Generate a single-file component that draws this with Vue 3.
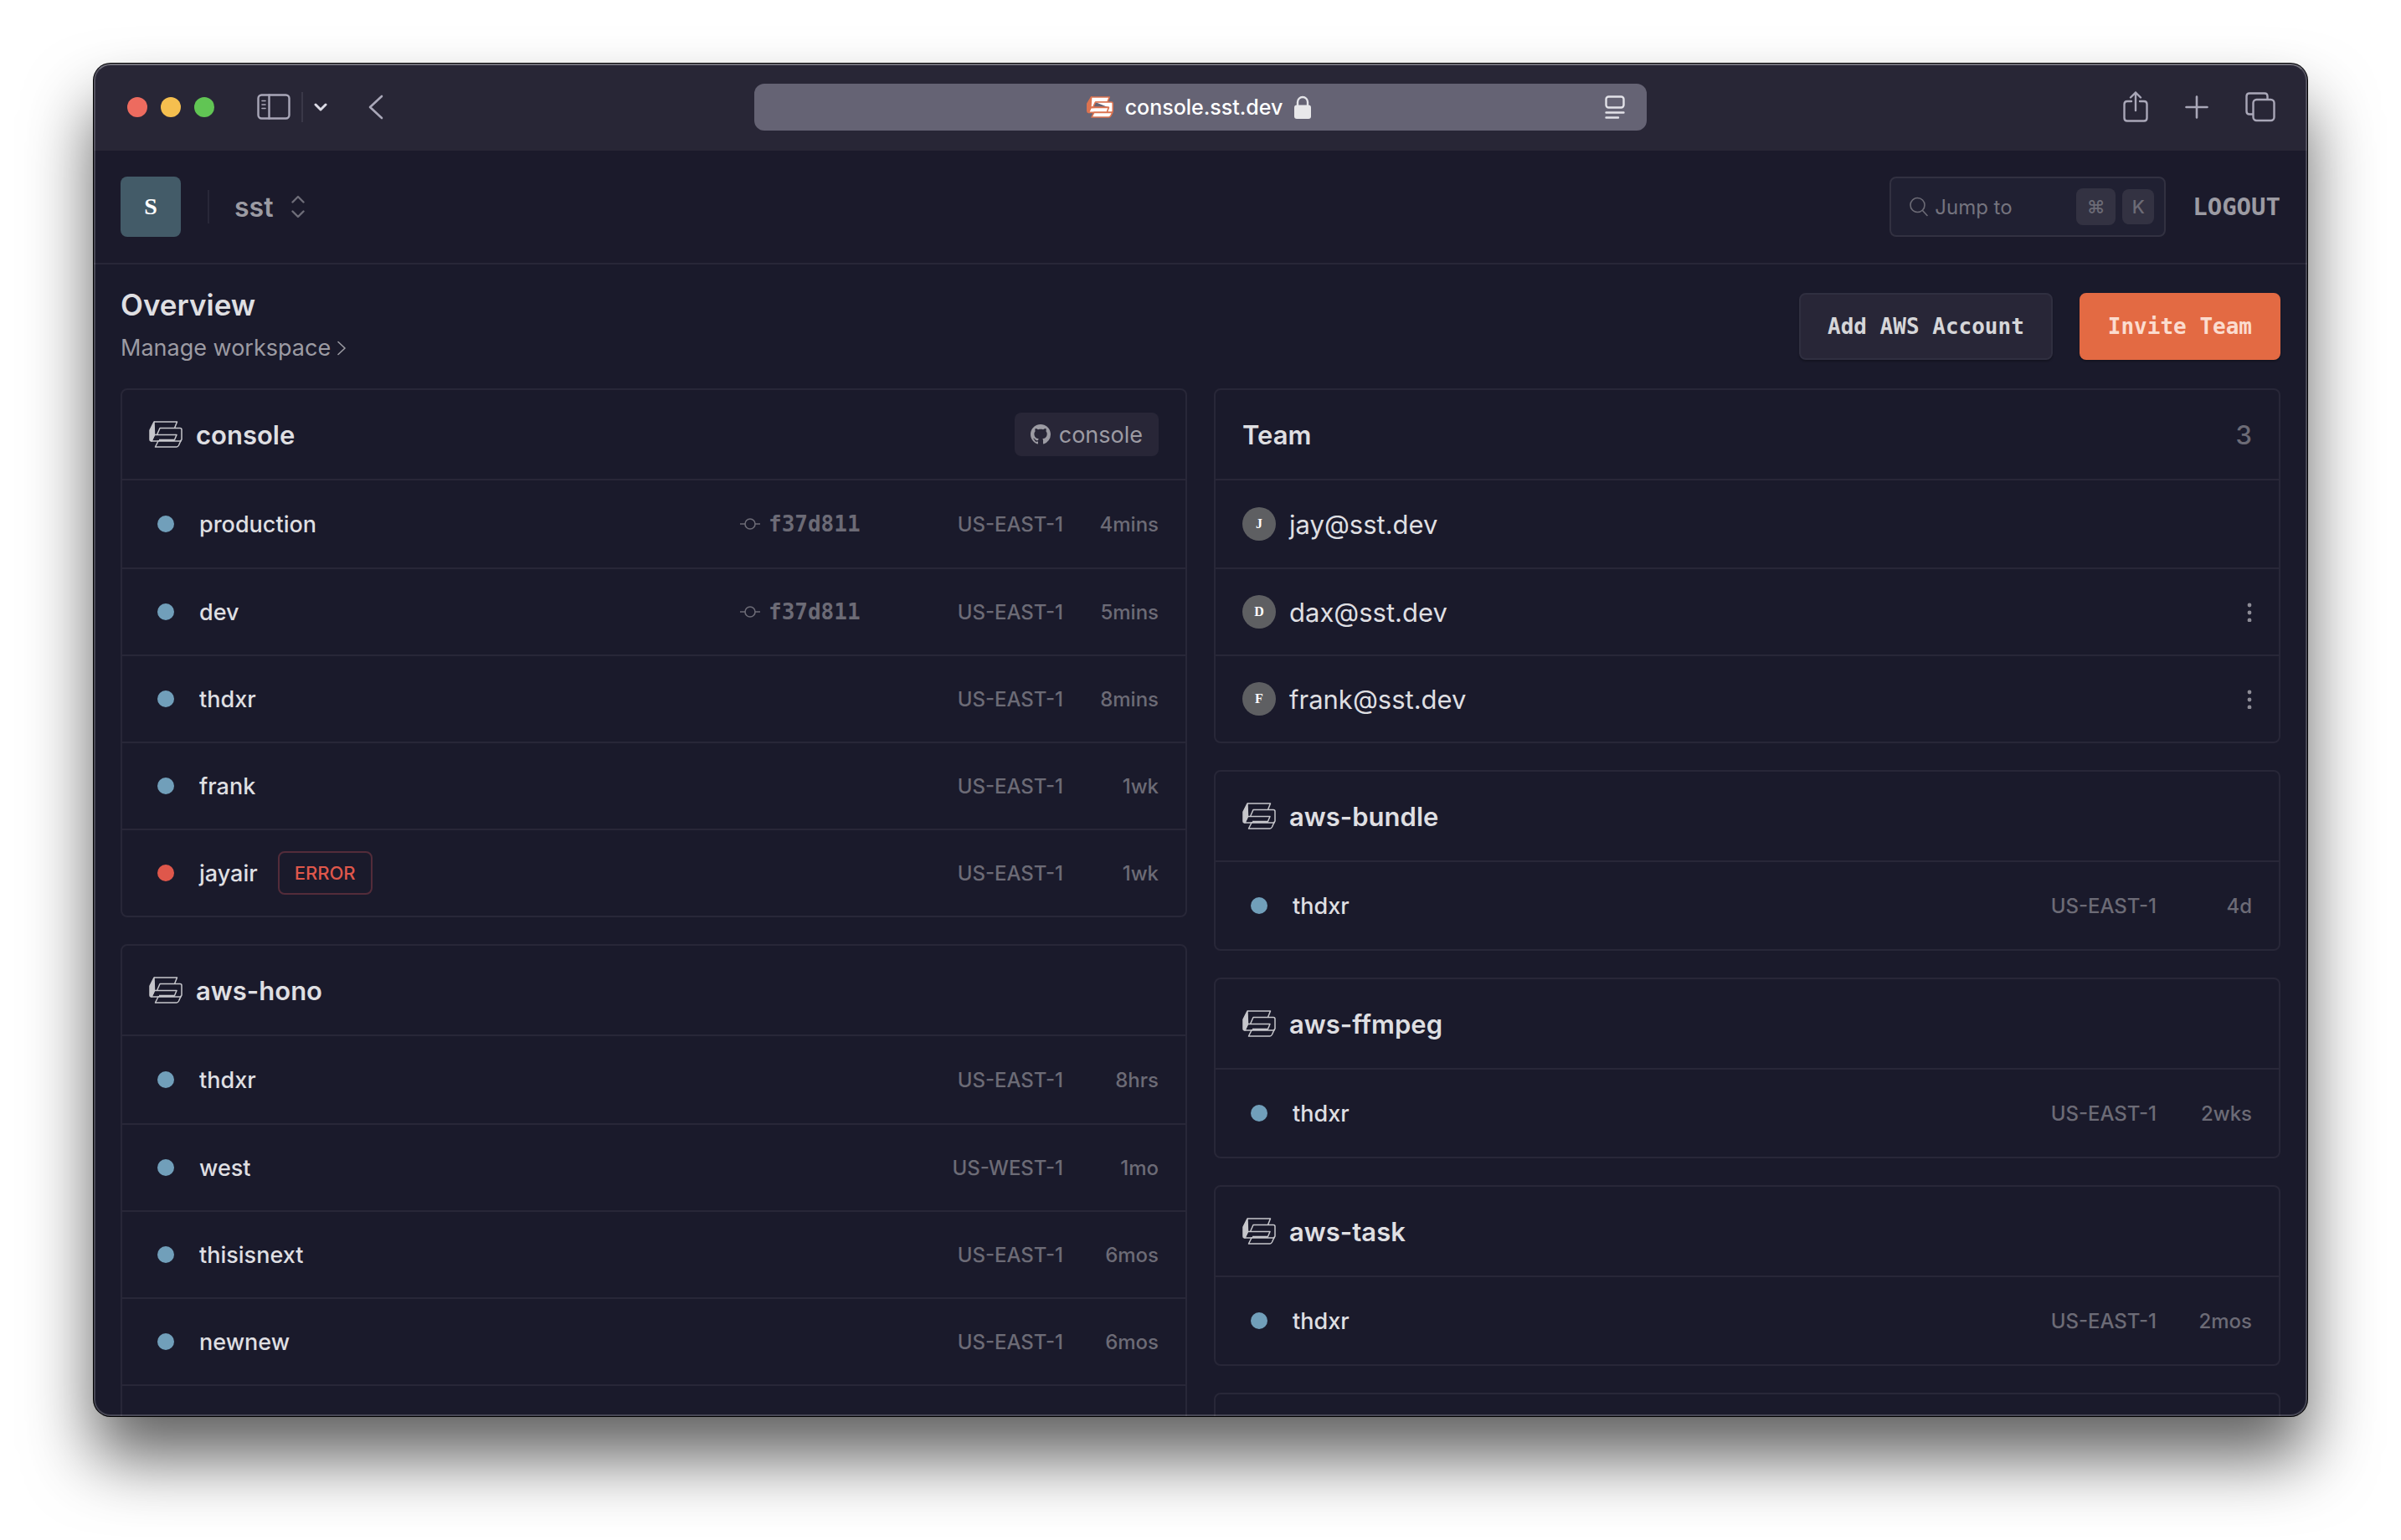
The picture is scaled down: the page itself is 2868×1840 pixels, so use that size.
<script setup>
import { ref } from 'vue'

const address = ref('console.sst.dev')
const query = ref('')

const east = 'US-EAST-1'
const primaryApps = [
  {
    name: 'console',
    repo: 'console',
    stages: [
      { name: 'production', commit: 'f37d811', region: east, updated: '4mins' },
      { name: 'dev', commit: 'f37d811', region: east, updated: '5mins' },
      { name: 'thdxr', region: east, updated: '8mins' },
      { name: 'frank', region: east, updated: '1wk' },
      { name: 'jayair', region: east, updated: '1wk', error: true },
    ],
  },
  {
    name: 'aws-hono',
    stages: [
      { name: 'thdxr', region: east, updated: '8hrs' },
      { name: 'west', region: 'US-WEST-1', updated: '1mo' },
      { name: 'thisisnext', region: east, updated: '6mos' },
      { name: 'newnew', region: east, updated: '6mos' },
      {},
    ],
  },
]
const team = [
  { email: 'jay@sst.dev', initial: 'J', self: true },
  { email: 'dax@sst.dev', initial: 'D' },
  { email: 'frank@sst.dev', initial: 'F' },
]
const secondaryApps = [
  { name: 'aws-bundle', stages: [{ name: 'thdxr', region: east, updated: '4d' }] },
  { name: 'aws-ffmpeg', stages: [{ name: 'thdxr', region: east, updated: '2wks' }] },
  { name: 'aws-task', stages: [{ name: 'thdxr', region: east, updated: '2mos' }] },
  { stages: [{}] },
]
const columns = [
  { id: 'left', apps: primaryApps },
  { id: 'right', apps: secondaryApps, team },
]
</script>

<template>
  <div class="desktop">
    <div class="window">
      <div class="toolbar">
        <div class="tools start">
          <div class="lights">
            <button class="light close" aria-label="Close"></button>
            <button class="light minimize" aria-label="Minimize"></button>
            <button class="light zoom" aria-label="Zoom"></button>
          </div>
          <button class="tool" aria-label="Show sidebar">
            <svg width="40" height="32" viewBox="0 0 40 32" fill="none" stroke="currentColor" stroke-width="2.4" stroke-linecap="round">
              <rect x="1.5" y="1.5" width="37" height="28" rx="4" />
              <path d="M14.5 1.5V29.5" />
              <path d="M6 8.5H10M6 13H10M6 17.500H10" stroke-width="1.6" />
            </svg>
          </button>
          <span class="tool-divider"></span>
          <button class="tool bright" aria-label="Tab groups">
            <svg width="16" height="10" viewBox="0 0 16 10" fill="none" stroke="currentColor" stroke-width="3" stroke-linecap="round" stroke-linejoin="round"><path d="M2 2L8 8L14 2" /></svg>
          </button>
          <button class="tool back" aria-label="Back">
            <svg width="18" height="30" viewBox="0 0 18 30" fill="none" stroke="currentColor" stroke-width="2.6" stroke-linecap="round" stroke-linejoin="round"><path d="M16 2L2 15L16 28" /></svg>
          </button>
        </div>

        <div class="address">
          <svg class="favicon" width="32" height="26" viewBox="0 0 40 32" stroke="#dc7350" stroke-width="2" stroke-linejoin="round">
            <path d="M7 1L1 11V22Q1 24 3 24L7 17Z" fill="#dc7350" />
            <path d="M7 1H34L31 8.5H13L9.500 16.5H6Z" fill="#fff" />
            <path d="M13 8.5H37Q39 8.5 39 10.5V22L38 24H3L6.5 16.5H33" fill="#fff" />
            <path d="M6.5 16.5H33L30.5 23M11 24L7.5 31H33Q35 31 36 29L38.5 24Z" fill="#fff" />
          </svg>
          <input v-model="address" class="address-input" type="text" aria-label="Address" />
          <svg width="20" height="28" viewBox="0 0 20 28" fill="none">
            <path d="M4 13V8a6 6 0 0 1 12 0V13" stroke="#e4e4e8" stroke-width="2.4" />
            <rect y="11.5" width="20" height="16.5" rx="3" fill="#e8e8ea" />
          </svg>
          <button class="tool reader" aria-label="Page menu">
            <svg width="24" height="28" viewBox="0 0 24 28" fill="none" stroke="currentColor" stroke-width="2.4" stroke-linecap="round">
              <rect x="1.5" y="1.5" width="21" height="13" rx="3" /><path d="M1.5 20.5H22.5M1.5 26.5H16" />
            </svg>
          </button>
        </div>

        <div class="tools end">
          <button class="tool" aria-label="Share">
            <svg width="30" height="38" viewBox="0 0 30 38" fill="none" stroke="currentColor" stroke-width="2.4" stroke-linecap="round" stroke-linejoin="round">
              <path d="M10 12H5Q1.5 12 1.5 15.500V32Q1.5 35.500 5 35.500H25Q28.5 35.500 28.5 32V15.500Q28.5 12 25 12H20" />
              <path d="M15 23V1.500M9 7.500L15 1.500L21 7.500" />
            </svg>
          </button>
          <button class="tool" aria-label="New tab">
            <svg width="28" height="28" viewBox="0 0 28 28" stroke="currentColor" stroke-width="2.6" stroke-linecap="round"><path d="M14 1.5V26.5M1.5 14H26.5" /></svg>
          </button>
          <button class="tool" aria-label="Tab overview">
            <svg width="36" height="36" viewBox="0 0 36 36" fill="none" stroke="currentColor" stroke-width="2.4" stroke-linejoin="round">
              <rect x="9.5" y="9" width="25" height="25" rx="4" />
              <path d="M9.5 26.5H5Q1.5 26.5 1.5 23V5Q1.5 1.5 5 1.5H23Q26.5 1.5 26.5 5V9" />
            </svg>
          </button>
        </div>
      </div>

      <header class="header">
        <span class="workspace-avatar">S</span>
        <span class="header-divider"></span>
        <button class="workspace">
          sst
          <svg width="16" height="28" viewBox="0 0 16 28" fill="none" stroke="#6e6d78" stroke-width="2.4" stroke-linecap="round" stroke-linejoin="round"><path d="M1.500 8.5L8 2L14.500 8.5M1.500 19.5L8 26L14.500 19.5" /></svg>
        </button>
        <label class="search">
          <svg width="22" height="24" viewBox="0 0 22 24" fill="none" stroke="currentColor" stroke-width="1.6" stroke-linecap="round"><circle cx="9.5" cy="10" r="8.5" /><path d="M15.5 16.5L21 22.5" /></svg>
          <input v-model="query" type="text" placeholder="Jump to" aria-label="Jump to" />
          <kbd class="command">⌘</kbd>
          <kbd>K</kbd>
        </label>
        <a class="logout" href="#logout">LOGOUT</a>
      </header>

      <main>
        <div class="overview">
          <div class="heading">
            <h1>Overview</h1>
            <a href="#settings">
              Manage workspace
              <svg width="10" height="18" viewBox="0 0 10 18" fill="none" stroke="currentColor" stroke-width="1.6" stroke-linecap="round" stroke-linejoin="round"><path d="M1 1.5L9 9L1 16.5" /></svg>
            </a>
          </div>
          <button class="action">Add AWS Account</button>
          <button class="action primary">Invite Team</button>
        </div>

        <div class="columns">
          <div v-for="column in columns" :key="column.id" class="column">
            <section v-if="column.team" class="card">
              <div class="card-header">
                <h2>Team</h2>
                <span class="count">{{ column.team.length }}</span>
              </div>
              <ul>
                <li v-for="member in column.team" :key="member.email" class="row member">
                  <span class="member-avatar">{{ member.initial }}</span>
                  <span class="email">{{ member.email }}</span>
                  <button v-if="!member.self" class="more" :aria-label="`Options for ${member.email}`">
                    <svg width="6" height="24" viewBox="0 0 6 24" fill="currentColor"><circle cx="3" cy="4" r="2.4" /><circle cx="3" cy="13" r="2.4" /><circle cx="3" cy="22" r="2.4" /></svg>
                  </button>
                </li>
              </ul>
            </section>

            <section v-for="(app, a) in column.apps" :key="a" class="card">
              <div class="card-header">
                <template v-if="app.name">
                  <svg class="app-logo" width="40" height="32" viewBox="0 0 40 32" fill="none" stroke="currentColor" stroke-width="1.5" stroke-linejoin="round">
                    <path d="M6 1L1 11V22Q1 24 3 24L6.5 16.5Z" fill="currentColor" />
                    <path d="M6 1H33.5L30.5 8.5M6 16.5H9.500L13 8.5H37Q39 8.5 39 10.5V22L38 24H3L6.5 16.5H33L30.5 22.5H12" />
                    <path d="M11.5 23L7.5 31H33Q34.5 31 35.5 29L38.5 22.5" />
                  </svg>
                  <h2>{{ app.name }}</h2>
                  <a v-if="app.repo" class="repo" href="#repo">
                    <svg width="24" height="24" viewBox="0 0 16 16" fill="currentColor"><path d="M8 0C3.58 0 0 3.58 0 8c0 3.54 2.29 6.53 5.47 7.59.4.07.55-.17.55-.38 0-.19-.01-.82-.01-1.49-2.01.37-2.53-.49-2.69-.94-.09-.23-.48-.94-.82-1.13-.28-.15-.68-.52-.01-.53.63-.01 1.08.58 1.23.82.72 1.21 1.87.87 2.33.66.07-.52.28-.87.51-1.07-1.78-.2-3.64-.89-3.64-3.95 0-.87.31-1.59.82-2.15-.08-.2-.36-1.02.08-2.12 0 0 .67-.21 2.2.82.64-.18 1.32-.27 2-.27.68 0 1.36.09 2 .27 1.53-1.04 2.2-.82 2.2-.82.44 1.1.16 1.92.08 2.12.51.56.82 1.27.82 2.15 0 3.07-1.87 3.75-3.65 3.95.29.25.54.73.54 1.48 0 1.07-.01 1.93-.01 2.2 0 .21.15.46.55.38A8.01 8.01 0 0 0 16 8c0-4.42-3.58-8-8-8z" /></svg>
                    {{ app.repo }}
                  </a>
                </template>
              </div>
              <ul>
                <li v-for="(stage, s) in app.stages" :key="s" class="row stage">
                  <template v-if="stage.name">
                    <span class="status" :class="{ failed: stage.error }"></span>
                    <span class="stage-name">
                      {{ stage.name }}
                      <span v-if="stage.error" class="badge">ERROR</span>
                    </span>
                    <span class="commit">
                      <template v-if="stage.commit">
                        <svg width="24" height="16" viewBox="0 0 24 16" fill="none" stroke="currentColor" stroke-width="1.6"><circle cx="12" cy="8" r="6" /><path d="M0 8H6M18 8H24" /></svg>
                        {{ stage.commit }}
                      </template>
                    </span>
                    <span class="region">{{ stage.region }}</span>
                    <span class="updated">{{ stage.updated }}</span>
                  </template>
                </li>
              </ul>
            </section>
          </div>
        </div>
      </main>
    </div>
  </div>
</template>

<style>
body {
  background: #fff;
}
</style>

<style scoped>
* {
  box-sizing: border-box;
}

.desktop {
  --line: #282738;
  --text: #dfdfe2;
  --soft: #9c9ba3;
  --muted: #6c6b76;
  --sans: Inter, Roboto, sans-serif;
  --mono: "DejaVu Sans Mono", "Liberation Mono", monospace;
  --slab: "Liberation Serif", serif;
  height: 100vh;
  padding: 76px 112px 148px;
  font-family: var(--sans);
  color: var(--text);
}

button,
input {
  border: 0;
  padding: 0;
  background: none;
  font: inherit;
  color: inherit;
}

a {
  color: inherit;
  text-decoration: none;
}

h1,
h2,
ul {
  margin: 0;
  padding: 0;
  list-style: none;
}

svg {
  display: block;
  flex: none;
}

.window {
  position: relative;
  height: 100%;
  overflow: hidden;
  border-radius: 20px;
  background: #1a1a2b;
  box-shadow: 0 0 0 1px #000, 0 50px 80px rgba(0, 0, 0, 0.62);
}

.window::after {
  content: "";
  position: absolute;
  inset: 0;
  border: 2px solid rgba(255, 255, 255, 0.2);
  border-top-color: rgba(255, 255, 255, 0.34);
  border-radius: 20px;
  pointer-events: none;
}

.toolbar {
  display: grid;
  grid-template-columns: 1fr minmax(0, 1066px) 1fr;
  align-items: center;
  height: 104px;
  padding: 0 38px;
  background: #282636;
}

.tools {
  display: flex;
  align-items: center;
  gap: 13px;
}

.tools.start {
  padding-left: 2px;
}

.tools.end {
  justify-content: flex-end;
  gap: 44px;
}

.tool {
  color: #a9a7b8;
}

.tool.bright {
  color: #dcdbe6;
}

.tool.back {
  margin-left: 36px;
}

.lights {
  display: flex;
  gap: 16px;
  margin-right: 38px;
}

.light {
  width: 24px;
  height: 24px;
  border-radius: 50%;
}

.close {
  background: #ed6b5f;
}

.minimize {
  background: #f5bf4f;
}

.zoom {
  background: #61c554;
}

.tool-divider {
  width: 2px;
  height: 36px;
  background: #3a3848;
}

.address {
  position: relative;
  display: flex;
  align-items: center;
  justify-content: center;
  gap: 12px;
  height: 56px;
  padding-right: 4px;
  border-radius: 12px;
  background: #656374;
}

.address-input {
  width: 192px;
  font-size: 25px;
  font-weight: 500;
  text-align: center;
  color: #fff;
}

.reader {
  position: absolute;
  right: 26px;
  color: #e2e2e8;
}

.header {
  display: flex;
  align-items: center;
  height: 136px;
  padding: 0 32px;
  border-bottom: 2px solid var(--line);
  background: #1b1a2b;
}

.workspace-avatar {
  display: grid;
  place-items: center;
  width: 72px;
  height: 72px;
  border-radius: 8px;
  background: #435b68;
  font: 700 28px var(--slab);
  color: #fff;
}

.header-divider {
  width: 2px;
  height: 40px;
  margin: 0 30px 0 32px;
  background: var(--line);
}

.workspace {
  display: flex;
  align-items: center;
  gap: 22px;
  font-size: 32px;
  font-weight: 600;
  color: #9c9ba3;
}

.search {
  display: flex;
  align-items: center;
  gap: 8px;
  width: 330px;
  height: 72px;
  margin: 0 32px 0 auto;
  padding: 0 12px 0 22px;
  border: 2px solid #323141;
  border-radius: 8px;
  background: #202032;
  color: var(--muted);
}

.search input {
  flex: 1;
  min-width: 0;
  font-size: 24px;
}

.search input::placeholder {
  color: #74737e;
  opacity: 1;
}

kbd {
  display: grid;
  place-items: center;
  width: 38px;
  height: 42px;
  border-radius: 8px;
  background: #333242;
  font: 500 22px var(--sans);
}

kbd.command {
  width: 47px;
  height: 44px;
}

.logout {
  font: 700 29px var(--mono);
  color: #9c9ba3;
}

.overview {
  display: flex;
  align-items: center;
  gap: 32px;
  padding: 30px 32px;
}

.heading {
  display: flex;
  flex-direction: column;
  gap: 16px;
  margin-right: auto;
  line-height: 36px;
}

h1 {
  font-size: 35px;
  font-weight: 600;
}

.heading a {
  display: flex;
  align-items: center;
  gap: 8px;
  font-size: 27px;
  color: var(--soft);
}

.action {
  height: 80px;
  padding: 0 32px;
  border: 2px solid #302f40;
  border-radius: 8px;
  background: #282637;
  box-shadow: 0 2px 2px rgba(0, 0, 0, 0.25);
  font: 700 26px var(--mono);
  color: #d6d6d9;
}

.action.primary {
  border-color: #e36a43;
  background: #e36a43;
  color: #fbdccf;
}

.columns {
  display: grid;
  grid-template-columns: 1fr 1fr;
  align-items: start;
  gap: 32px;
  padding: 0 32px;
}

.column {
  display: grid;
  gap: 32px;
}

.card {
  border: 2px solid var(--line);
  border-radius: 8px;
}

.card-header {
  display: flex;
  align-items: center;
  gap: 16px;
  height: 106px;
  padding: 0 32px;
}

h2 {
  font-size: 31px;
  font-weight: 600;
}

.app-logo {
  color: #c6c6cb;
}

.count {
  margin-left: auto;
  font-size: 31px;
  font-weight: 500;
  color: var(--muted);
}

.repo {
  display: flex;
  align-items: center;
  gap: 10px;
  height: 52px;
  margin-left: auto;
  padding: 0 19px;
  border-radius: 8px;
  background: #282637;
  font-size: 27px;
  color: var(--soft);
}

.row {
  display: flex;
  align-items: center;
  height: 104px;
  padding: 0 32px;
  border-top: 2px solid var(--line);
}

.row:first-child {
  height: 106px;
}

.member {
  gap: 16px;
}

.member-avatar {
  display: grid;
  place-items: center;
  width: 40px;
  height: 40px;
  border-radius: 50%;
  background: #5e5f62;
  font: 700 16px var(--slab);
  color: #fff;
}

.email {
  font-size: 31px;
}

.more {
  margin-left: auto;
  color: #8d8c96;
}

.status {
  width: 20px;
  height: 20px;
  margin: 0 30px 0 10px;
  border-radius: 50%;
  background: #719fba;
}

.status.failed {
  background: #df574b;
}

.stage-name {
  display: flex;
  flex: 1;
  align-items: center;
  gap: 24px;
  font-size: 27px;
  font-weight: 500;
}

.badge {
  display: flex;
  align-items: center;
  height: 52px;
  padding: 0 18px;
  border: 2px solid #532c3a;
  border-radius: 8px;
  font-size: 22px;
  color: #df574b;
}

.commit {
  display: flex;
  align-items: center;
  gap: 10px;
  width: 160px;
  font: 700 26px var(--mono);
  color: var(--muted);
}

.region,
.updated {
  font-size: 24px;
  font-weight: 500;
  text-align: right;
  color: var(--muted);
}

.region {
  width: 226px;
}

.updated {
  width: 114px;
}
</style>
